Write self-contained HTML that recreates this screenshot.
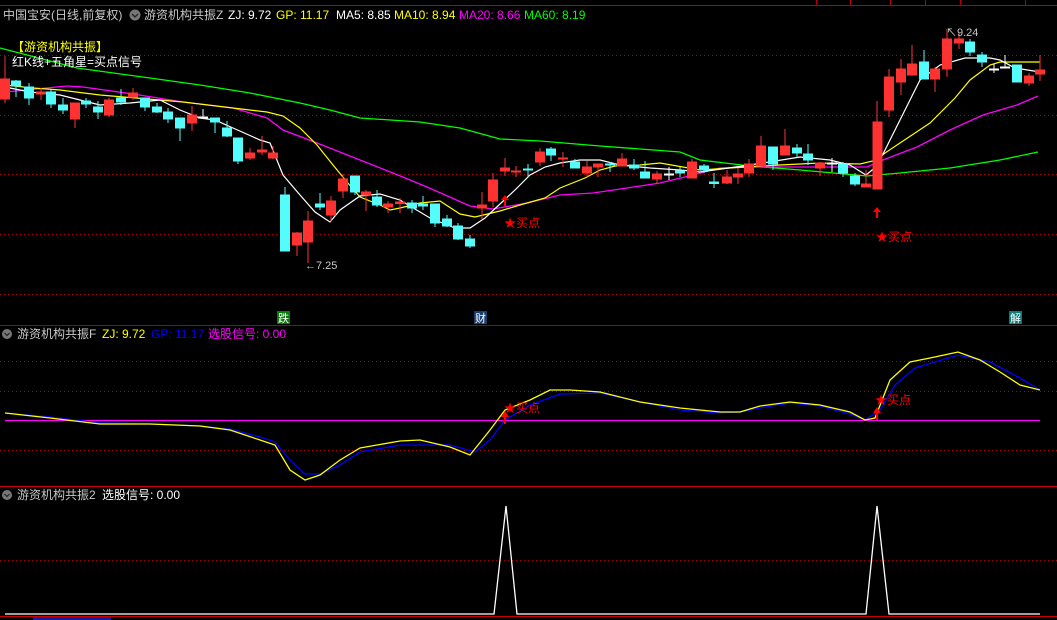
<!DOCTYPE html>
<html><head><meta charset="utf-8"><style>
html,body{margin:0;padding:0;background:#000;width:1057px;height:620px;overflow:hidden}
svg{display:block}
text{font-family:"Liberation Sans","Noto Sans CJK SC",sans-serif}
</style></head><body>
<svg width="1057" height="620" viewBox="0 0 1057 620" xmlns="http://www.w3.org/2000/svg">
<rect width="1057" height="620" fill="#000"/>
<line x1="0" y1="5.5" x2="1057" y2="5.5" stroke="#b00"/>
<g stroke="#b00"><line x1="816.5" y1="0" x2="816.5" y2="5"/><line x1="850.5" y1="0" x2="850.5" y2="5"/><line x1="890.5" y1="0" x2="890.5" y2="5"/><line x1="925.5" y1="0" x2="925.5" y2="5"/><line x1="960.5" y1="0" x2="960.5" y2="5"/><line x1="1025.5" y1="0" x2="1025.5" y2="5"/></g>
<text y="19" font-size="12"><tspan x="3" fill="#c8c8c8">中国宝安(日线,前复权)</tspan></text>
<circle cx="135" cy="15" r="5.5" fill="#777"/><path d="M132 14 l3 3 l3 -3" stroke="#222" fill="none" stroke-width="1.3"/>
<text y="19" font-size="12"><tspan x="144" fill="#c8c8c8">游资机构共振Z</tspan><tspan x="228" fill="#fff">ZJ: 9.72</tspan><tspan x="276" fill="#ff0">GP: 11.17</tspan><tspan x="336" fill="#fff">MA5: 8.85</tspan><tspan x="394" fill="#ff0">MA10: 8.94</tspan><tspan x="459" fill="#f0f">MA20: 8.66</tspan><tspan x="524" fill="#0f0">MA60: 8.19</tspan></text>
<g stroke="#a00" stroke-dasharray="1,3">
<line x1="0" y1="55.5" x2="1057" y2="55.5"/><line x1="0" y1="115.5" x2="1057" y2="115.5"/><line x1="0" y1="174.5" x2="1057" y2="174.5"/><line x1="0" y1="234.5" x2="1057" y2="234.5"/><line x1="0" y1="294.5" x2="1057" y2="294.5"/>
<line x1="0" y1="361.5" x2="1057" y2="361.5"/><line x1="0" y1="391.5" x2="1057" y2="391.5"/><line x1="0" y1="450.5" x2="1057" y2="450.5"/>
<line x1="0" y1="560.5" x2="1057" y2="560.5"/>
</g>
<polyline fill="none" stroke="#0f0" stroke-width="1.3" points="0,48 77,68 150,78 200,85 250,93 300,103 330,110 360,118 420,122 460,128 500,139 540,141 600,146 640,149 680,152 700,160 750,166 800,170 867,176 900,173 950,168 1000,160 1038,152"/>
<polyline fill="none" stroke="#f0f" stroke-width="1.3" points="5,92 67,86 83,87 133,94 183,102 233,108 267,118 283,130 317,143 360,160 393,173 427,187 470,206 493,209 527,203 560,195 593,193 627,188 660,183 693,175 720,168 750,167 867,167 883,160 917,147 950,130 983,115 1017,105 1038,96"/>
<polyline fill="none" stroke="#ff0" stroke-width="1.2" points="5,85 33,88 60,90 100,95 183,102 233,108 267,112 283,116 300,128 317,145 333,165 347,182 360,197 380,205 390,210 400,208 420,203 440,201 460,214 475,217 500,211 520,205 545,198 560,188 585,178 600,170 615,166 640,165 660,163 700,170 730,168 780,165 820,163 860,164 877,160 885,153 900,143 930,123 955,98 970,80 990,65 1000,62 1040,62"/>
<polyline fill="none" stroke="#fff" stroke-width="1.2" points="5,87 30,92 60,95 100,105 130,103 160,100 180,110 200,118 215,120 233,128 260,140 270,143 283,175 300,195 315,212 330,222 340,210 360,196 380,194 400,200 430,218 455,228 470,228 485,218 500,204 515,190 530,175 545,167 560,163 580,160 600,160 620,165 650,168 680,170 700,172 750,165 800,157 830,160 850,165 866,175 877,166 890,140 905,110 920,80 940,65 965,58 990,58 1000,60 1015,68 1040,72"/>
<g>
<g stroke="#ff3232" fill="#ff3232">
<line x1="5" y1="62" x2="5" y2="103"/><rect x="0.5" y="79" width="9" height="20"/>
<line x1="41" y1="88" x2="41" y2="100"/><rect x="36.5" y="92" width="9" height="2"/>
<line x1="75" y1="103" x2="75" y2="128"/><rect x="70.5" y="103" width="9" height="16"/>
<line x1="109" y1="98" x2="109" y2="117"/><rect x="104.5" y="100" width="9" height="15"/>
<line x1="133" y1="88" x2="133" y2="100"/><rect x="128.5" y="93" width="9" height="4"/>
<line x1="192" y1="106" x2="192" y2="131"/><rect x="187.5" y="115" width="9" height="8"/>
<line x1="250" y1="148" x2="250" y2="160"/><rect x="245.5" y="153" width="9" height="5"/>
<line x1="262" y1="136" x2="262" y2="155"/><rect x="257.5" y="150" width="9" height="2"/>
<line x1="273" y1="146" x2="273" y2="159"/><rect x="268.5" y="153" width="9" height="5"/>
<line x1="297" y1="232" x2="297" y2="256"/><rect x="292.5" y="233" width="9" height="12"/>
<line x1="308" y1="211" x2="308" y2="263"/><rect x="303.5" y="221" width="9" height="21"/>
<line x1="331" y1="196" x2="331" y2="222"/><rect x="326.5" y="201" width="9" height="14"/>
<line x1="343" y1="174" x2="343" y2="198"/><rect x="338.5" y="179" width="9" height="12"/>
<line x1="366" y1="190" x2="366" y2="211"/><rect x="361.5" y="192" width="9" height="3"/>
<line x1="388" y1="201" x2="388" y2="213"/><rect x="383.5" y="204" width="9" height="3"/>
<line x1="400" y1="198" x2="400" y2="213"/><rect x="395.5" y="202" width="9" height="1.5"/>
<line x1="482" y1="192" x2="482" y2="219"/><rect x="477.5" y="205" width="9" height="3"/>
<line x1="493" y1="173" x2="493" y2="207"/><rect x="488.5" y="180" width="9" height="21"/>
<line x1="505" y1="158" x2="505" y2="176"/><rect x="500.5" y="168" width="9" height="3"/>
<line x1="516" y1="166" x2="516" y2="177"/><rect x="511.5" y="171" width="9" height="1"/>
<line x1="540" y1="148" x2="540" y2="166"/><rect x="535.5" y="152" width="9" height="10"/>
<line x1="563" y1="152" x2="563" y2="167"/><rect x="558.5" y="158" width="9" height="1"/>
<line x1="587" y1="161" x2="587" y2="177"/><rect x="582.5" y="167" width="9" height="6"/>
<line x1="598" y1="164" x2="598" y2="177"/><rect x="593.5" y="164" width="9" height="3"/>
<line x1="622" y1="153" x2="622" y2="166"/><rect x="617.5" y="159" width="9" height="7"/>
<line x1="657" y1="171" x2="657" y2="184"/><rect x="652.5" y="174" width="9" height="5"/>
<line x1="692" y1="159" x2="692" y2="178"/><rect x="687.5" y="162" width="9" height="16"/>
<line x1="727" y1="170" x2="727" y2="184"/><rect x="722.5" y="177" width="9" height="6"/>
<line x1="738" y1="168" x2="738" y2="184"/><rect x="733.5" y="174" width="9" height="3"/>
<line x1="749" y1="159" x2="749" y2="177"/><rect x="744.5" y="164" width="9" height="9"/>
<line x1="761" y1="136" x2="761" y2="166"/><rect x="756.5" y="146" width="9" height="20"/>
<line x1="785" y1="129" x2="785" y2="155"/><rect x="780.5" y="146" width="9" height="9"/>
<line x1="820" y1="162" x2="820" y2="176"/><rect x="815.5" y="163" width="9" height="5"/>
<line x1="866" y1="170" x2="866" y2="187"/><rect x="861.5" y="184" width="9" height="3"/>
<line x1="877" y1="101" x2="877" y2="189"/><rect x="873" y="122" width="9" height="67"/>
<line x1="889" y1="69" x2="889" y2="117"/><rect x="884.5" y="77" width="9" height="33"/>
<line x1="901" y1="59" x2="901" y2="95"/><rect x="896.5" y="69" width="9" height="13"/>
<line x1="912" y1="45" x2="912" y2="76"/><rect x="907.5" y="64" width="9" height="11"/>
<line x1="935" y1="67" x2="935" y2="92"/><rect x="930.5" y="69" width="9" height="10"/>
<line x1="947" y1="29" x2="947" y2="77"/><rect x="942.5" y="39" width="9" height="30"/>
<line x1="959" y1="32" x2="959" y2="49"/><rect x="954.5" y="39" width="9" height="4"/>
<line x1="1029" y1="73" x2="1029" y2="86"/><rect x="1024.5" y="76" width="9" height="7"/>
<line x1="1040" y1="55" x2="1040" y2="81"/><rect x="1035.5" y="70" width="9" height="4"/>
</g>
<g stroke="#54fcfc" fill="#54fcfc">
<line x1="16" y1="80" x2="16" y2="97"/><rect x="11.5" y="81" width="9" height="5"/>
<line x1="29" y1="83" x2="29" y2="105"/><rect x="24.5" y="87" width="9" height="11"/>
<line x1="51" y1="90" x2="51" y2="108"/><rect x="46.5" y="92" width="9" height="12"/>
<line x1="63" y1="98" x2="63" y2="114"/><rect x="58.5" y="105" width="9" height="5"/>
<line x1="86" y1="98" x2="86" y2="108"/><rect x="81.5" y="101" width="9" height="3"/>
<line x1="98" y1="101" x2="98" y2="119"/><rect x="93.5" y="107" width="9" height="5"/>
<line x1="121" y1="89" x2="121" y2="105"/><rect x="116.5" y="98" width="9" height="4"/>
<line x1="145" y1="98" x2="145" y2="111"/><rect x="140.5" y="98" width="9" height="9"/>
<line x1="157" y1="103" x2="157" y2="113"/><rect x="152.5" y="107" width="9" height="5"/>
<line x1="168" y1="108" x2="168" y2="123"/><rect x="163.5" y="112" width="9" height="7"/>
<line x1="180" y1="118" x2="180" y2="141"/><rect x="175.5" y="118" width="9" height="10"/>
<line x1="215" y1="118" x2="215" y2="133"/><rect x="210.5" y="118" width="9" height="4"/>
<line x1="227" y1="121" x2="227" y2="137"/><rect x="222.5" y="128" width="9" height="8"/>
<line x1="238" y1="138" x2="238" y2="164"/><rect x="233.5" y="138" width="9" height="23"/>
<line x1="285" y1="187" x2="285" y2="251"/><rect x="280.5" y="195" width="9" height="56"/>
<line x1="320" y1="193" x2="320" y2="210"/><rect x="315.5" y="204" width="9" height="3"/>
<line x1="355" y1="176" x2="355" y2="195"/><rect x="350.5" y="176" width="9" height="16"/>
<line x1="377" y1="190" x2="377" y2="207"/><rect x="372.5" y="197" width="9" height="8"/>
<line x1="412" y1="200" x2="412" y2="213"/><rect x="407.5" y="203" width="9" height="5"/>
<line x1="423" y1="196" x2="423" y2="210"/><rect x="418.5" y="204" width="9" height="2"/>
<line x1="435" y1="204" x2="435" y2="227"/><rect x="430.5" y="204" width="9" height="19"/>
<line x1="447" y1="215" x2="447" y2="227"/><rect x="442.5" y="219" width="9" height="7"/>
<line x1="458" y1="223" x2="458" y2="240"/><rect x="453.5" y="226" width="9" height="13"/>
<line x1="470" y1="235" x2="470" y2="248"/><rect x="465.5" y="239" width="9" height="7"/>
<line x1="528" y1="164" x2="528" y2="177"/><rect x="523.5" y="169" width="9" height="1"/>
<line x1="551" y1="147" x2="551" y2="161"/><rect x="546.5" y="149" width="9" height="6"/>
<line x1="575" y1="159" x2="575" y2="168"/><rect x="570.5" y="162" width="9" height="6"/>
<line x1="610" y1="162" x2="610" y2="172"/><rect x="605.5" y="164" width="9" height="1"/>
<line x1="634" y1="159" x2="634" y2="170"/><rect x="629.5" y="165" width="9" height="3"/>
<line x1="645" y1="161" x2="645" y2="178"/><rect x="640.5" y="172" width="9" height="6"/>
<line x1="680" y1="167" x2="680" y2="177"/><rect x="675.5" y="171" width="9" height="2"/>
<line x1="704" y1="164" x2="704" y2="173"/><rect x="699.5" y="166" width="9" height="4"/>
<line x1="714" y1="173" x2="714" y2="188"/><rect x="709.5" y="182" width="9" height="1.5"/>
<line x1="773" y1="147" x2="773" y2="170"/><rect x="768.5" y="147" width="9" height="17"/>
<line x1="797" y1="144" x2="797" y2="157"/><rect x="792.5" y="148" width="9" height="5"/>
<line x1="808" y1="144" x2="808" y2="165"/><rect x="803.5" y="154" width="9" height="6"/>
<line x1="843" y1="162" x2="843" y2="177"/><rect x="838.5" y="164" width="9" height="9"/>
<line x1="855" y1="173" x2="855" y2="186"/><rect x="850.5" y="176" width="9" height="8"/>
<line x1="924" y1="50" x2="924" y2="79"/><rect x="919.5" y="62" width="9" height="17"/>
<line x1="970" y1="39" x2="970" y2="56"/><rect x="965.5" y="42" width="9" height="10"/>
<line x1="982" y1="52" x2="982" y2="67"/><rect x="977.5" y="55" width="9" height="7"/>
<line x1="1017" y1="65" x2="1017" y2="82"/><rect x="1012.5" y="65" width="9" height="17"/>
</g>
<g stroke="#fff" fill="#fff">
<line x1="203" y1="109" x2="203" y2="119"/><rect x="198.5" y="117" width="9" height="1"/>
<line x1="669" y1="167" x2="669" y2="180"/><rect x="664.5" y="174" width="9" height="1"/>
<line x1="832" y1="158" x2="832" y2="172"/><rect x="827.5" y="163" width="9" height="1"/>
<line x1="994" y1="64" x2="994" y2="73"/><rect x="989.5" y="69" width="9" height="1"/>
<line x1="1005" y1="55" x2="1005" y2="68"/><rect x="1000.5" y="67" width="9" height="1"/>
</g>
</g>
<text x="12" y="51" font-size="12" fill="#ff0">【游资机构共振】</text>
<text x="12" y="66" font-size="12" fill="#fff">红K线+五角星=买点信号</text>
<line x1="5" y1="56" x2="5" y2="66" stroke="#d33"/>
<text x="305" y="269" font-size="11" fill="#c8c8c8">←7.25</text>
<text x="946" y="36" font-size="11" fill="#c8c8c8">↖9.24</text>
<g fill="#f00">
<path d="M505 195 l-4 5 h3 v6 h2 v-6 h3 z"/>
<path d="M877 207 l-4 5 h3 v6 h2 v-6 h3 z"/>
</g>
<text x="504" y="227" font-size="12" fill="#f00">★买点</text>
<text x="876" y="241" font-size="12" fill="#f00">★买点</text>
<rect x="277" y="311" width="13" height="13" fill="#0a7a0a"/><text x="278" y="322" font-size="11" fill="#fff">跌</text>
<rect x="474" y="311" width="13" height="13" fill="#1a3e6e"/><text x="475" y="322" font-size="11" fill="#fff">财</text>
<rect x="1009" y="311" width="13" height="13" fill="#0a7a7a"/><text x="1010" y="322" font-size="11" fill="#fff">解</text>
<line x1="0" y1="325.5" x2="1057" y2="325.5" stroke="#a00"/>
<line x1="0" y1="486.5" x2="1057" y2="486.5" stroke="#c00"/>
<line x1="0" y1="616.5" x2="1057" y2="616.5" stroke="#c00"/>
<circle cx="7" cy="334" r="5" fill="#777"/><path d="M4.5 333 l2.5 2.5 l2.5 -2.5" stroke="#222" fill="none" stroke-width="1.2"/>
<text y="338" font-size="12"><tspan x="17" fill="#c8c8c8">游资机构共振F</tspan><tspan x="102" fill="#ff0">ZJ: 9.72</tspan><tspan x="151" fill="#0000ff">GP: 11.17</tspan><tspan x="208" fill="#f0f">选股信号: 0.00</tspan></text>
<line x1="5" y1="420.5" x2="1040" y2="420.5" stroke="#f0f" stroke-width="1.3"/>
<polyline fill="none" stroke="#0000ff" stroke-width="1.3" points="5,413 50,417 100,423 150,424 200,426 230,429 260,437 275,442 290,460 305,474 320,474 340,465 360,452 400,445 450,445 475,452 490,440 505,420 530,405 560,394 600,393 640,402 680,410 720,413 740,412 760,408 790,403 820,406 850,414 865,420 880,410 895,385 915,368 958,355 990,362 1020,378 1040,390"/>
<polyline fill="none" stroke="#ff0" stroke-width="1.3" points="5,413 50,418 100,424 150,424 200,426 230,430 260,440 275,445 290,470 305,480 320,475 340,460 360,448 400,441 420,440 450,447 470,455 490,430 505,410 530,400 550,390 570,390 600,392 640,402 680,408 720,412 740,412 760,406 790,402 820,405 850,412 865,420 875,418 890,380 910,362 930,358 958,352 980,360 1000,372 1020,385 1040,390"/>
<g fill="#f00">
<path d="M505 411 l-4 6 h3 v7 h2 v-7 h3 z"/>
<path d="M877 407 l-4 6 h3 v7 h2 v-7 h3 z"/>
</g>
<text x="504" y="412" font-size="12" fill="#f00">★买点</text>
<text x="875" y="404" font-size="12" fill="#f00">★买点</text>
<circle cx="7" cy="495" r="5" fill="#777"/><path d="M4.5 494 l2.5 2.5 l2.5 -2.5" stroke="#222" fill="none" stroke-width="1.2"/>
<text y="499" font-size="12"><tspan x="17" fill="#c8c8c8">游资机构共振2</tspan><tspan x="102" fill="#fff">选股信号: 0.00</tspan></text>
<polyline fill="none" stroke="#fff" stroke-width="1.3" points="5,614 494,614 506,506 517,614 866,614 877,506 889,614 1040,614"/>
<rect x="33" y="617" width="78" height="3" fill="#1a1aa0"/>
</svg>
</body></html>
